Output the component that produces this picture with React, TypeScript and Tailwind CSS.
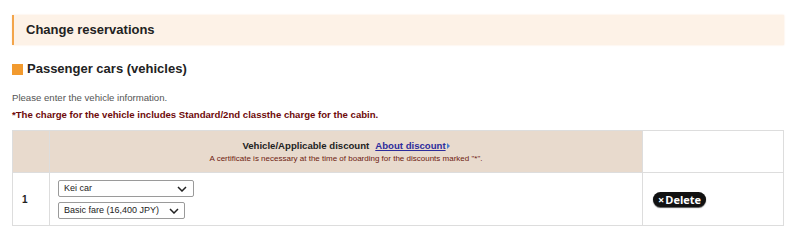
import React, { useState } from 'react';

export default function App() {
  const [vehicle, setVehicle] = useState('Kei car');
  const [fare, setFare] = useState('basic');

  return (
    <div className="w-[800px] h-[242px] bg-white font-['Liberation_Sans',Arial,sans-serif] text-[#333]">
      <div className="ml-3 w-[772px] pt-[15px]">
        {/* Page heading */}
        <div className="h-[30px] flex items-center bg-[#fdf2e7] border-l-2 border-[#f3a54a] pl-3 shadow-[0_0_2px_#fbe9da]">
          <h1 className="text-[13px] font-bold text-[#222]">Change reservations</h1>
        </div>

        {/* Section heading */}
        <div className="mt-[15px] flex items-center gap-1 h-[18px]">
          <span className="w-[11px] h-[11px] bg-[#f29a2e]" />
          <h2 className="text-[13px] font-bold text-[#222]">Passenger cars (vehicles)</h2>
        </div>

        <p className="mt-[13px] text-[9.6px] text-[#555] leading-[13px]">Please enter the vehicle information.</p>
        <p className="mt-[4px] text-[9.6px] font-bold text-[#6e0a0a] leading-[13px]">
          *The charge for the vehicle includes Standard/2nd classthe charge for the cabin.
        </p>

        {/* Vehicle table */}
        <table className="mt-[9px] w-full border-collapse">
          <thead>
            <tr className="h-[42px]">
              <th className="w-[37px] bg-[#e8dacd] border border-[#ddd]" />
              <th className="bg-[#e8dacd] border border-[#ddd] text-center font-normal">
                <div className="text-[9.6px] leading-[13px]">
                  <span className="font-bold text-[#222]">Vehicle/Applicable discount</span>
                  <a href="#" className="ml-[6px] font-bold text-[#2d2c9c] underline">About discount</a>
                  <span className="inline-block ml-[1px] w-0 h-0 border-y-[3px] border-y-transparent border-l-[3px] border-l-[#4a7fd0]" />
                </div>
                <div className="text-[8px] leading-[11px] text-[#6e1a10] mt-[1px]">
                  A certificate is necessary at the time of boarding for the discounts marked "*".
                </div>
              </th>
              <th className="w-[141px] bg-white border border-[#ddd]" />
            </tr>
          </thead>
          <tbody>
            <tr className="h-[53px]">
              <td className="border border-[#ddd] pl-[9px] text-[10px] font-bold text-[#222]">1</td>
              <td className="border border-[#ddd] pl-[8px] align-middle">
                <div className="flex flex-col gap-[5px] items-start">
                  <div className="relative">
                    <select
                      value={vehicle}
                      onChange={(e) => setVehicle(e.target.value)}
                      className="block appearance-none w-[136px] h-[17px] border border-[#9a9a9a] rounded-[2px] bg-white text-[9px] text-[#222] pl-[5px] leading-[15px]"
                    >
                      <option>Kei car</option>
                      <option>Small car</option>
                    </select>
                    <svg className="absolute right-[7px] top-[6px] pointer-events-none" width="10" height="6" viewBox="0 0 10 6">
                      <path d="M1 1l4 4 4-4" fill="none" stroke="#222" strokeWidth="1.5" />
                    </svg>
                  </div>
                  <div className="relative">
                    <select
                      value={fare}
                      onChange={(e) => setFare(e.target.value)}
                      className="block appearance-none w-[127px] h-[17px] border border-[#9a9a9a] rounded-[2px] bg-white text-[9px] text-[#222] pl-[5px] leading-[15px]"
                    >
                      <option value="basic">Basic fare (16,400 JPY)</option>
                    </select>
                    <svg className="absolute right-[6px] top-[6px] pointer-events-none" width="10" height="6" viewBox="0 0 10 6">
                      <path d="M1 1l4 4 4-4" fill="none" stroke="#222" strokeWidth="1.5" />
                    </svg>
                  </div>
                </div>
              </td>
              <td className="border border-[#ddd] pl-[10px] align-middle">
                <button className="h-[15px] px-[5px] rounded-full bg-[#111] text-white text-[11px] font-bold font-['Open_Sans',sans-serif] flex items-center leading-none shadow-[0_1px_1px_#555]">
                  <span className="text-[11px] mr-[1px]">×</span>Delete
                </button>
              </td>
            </tr>
          </tbody>
        </table>
      </div>
    </div>
  );
}
